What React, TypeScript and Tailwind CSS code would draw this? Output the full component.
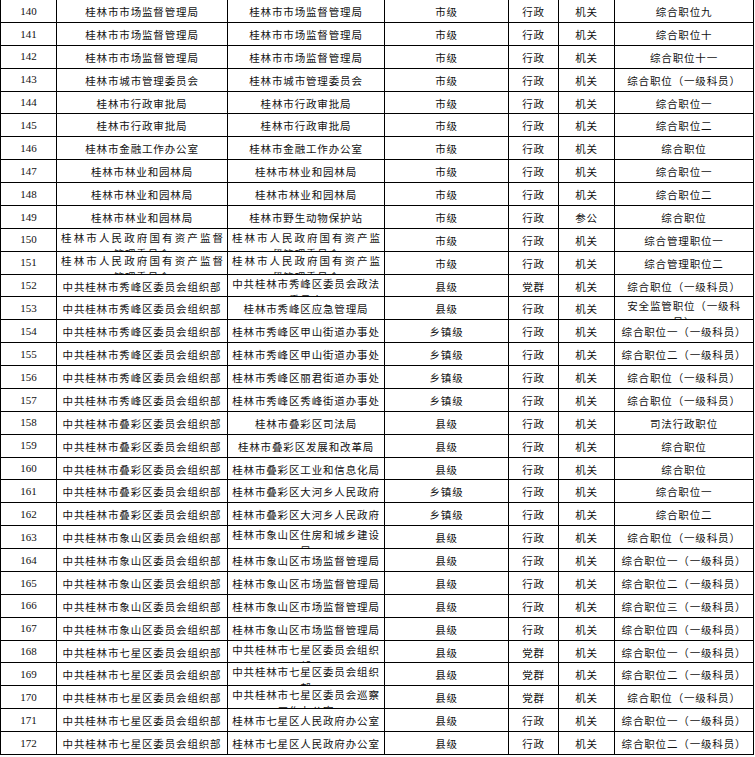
type Wrapped = { l1: string; l2: string; j?: boolean };
type Cell = string | Wrapped;

const A = "桂林市市场监督管理局";
const GZ = "桂林市人民政府国有资产监督管理委员会";
const XF = "中共桂林市秀峰区委员会组织部";
const DC = "中共桂林市叠彩区委员会组织部";
const XS = "中共桂林市象山区委员会组织部";
const QX = "中共桂林市七星区委员会组织部";
const P1 = "综合职位（一级科员）";

const rows: [string, Cell, Cell, string, string, string, Cell][] = [
  ["140", A, A, "市级", "行政", "机关", "综合职位九"],
  ["141", A, A, "市级", "行政", "机关", "综合职位十"],
  ["142", A, A, "市级", "行政", "机关", "综合职位十一"],
  ["143", "桂林市城市管理委员会", "桂林市城市管理委员会", "市级", "行政", "机关", P1],
  ["144", "桂林市行政审批局", "桂林市行政审批局", "市级", "行政", "机关", "综合职位一"],
  ["145", "桂林市行政审批局", "桂林市行政审批局", "市级", "行政", "机关", "综合职位二"],
  ["146", "桂林市金融工作办公室", "桂林市金融工作办公室", "市级", "行政", "机关", "综合职位"],
  ["147", "桂林市林业和园林局", "桂林市林业和园林局", "市级", "行政", "机关", "综合职位一"],
  ["148", "桂林市林业和园林局", "桂林市林业和园林局", "市级", "行政", "机关", "综合职位二"],
  ["149", "桂林市林业和园林局", "桂林市野生动物保护站", "市级", "行政", "参公", "综合职位"],
  [
    "150",
    { l1: GZ.slice(0, 13), l2: GZ.slice(13), j: true },
    { l1: GZ.slice(0, 12), l2: GZ.slice(12), j: true },
    "市级", "行政", "机关", "综合管理职位一",
  ],
  [
    "151",
    { l1: GZ.slice(0, 13), l2: GZ.slice(13), j: true },
    { l1: GZ.slice(0, 12), l2: GZ.slice(12), j: true },
    "市级", "行政", "机关", "综合管理职位二",
  ],
  ["152", XF, { l1: "中共桂林市秀峰区委员会政法", l2: "委员会" }, "县级", "党群", "机关", P1],
  ["153", XF, "桂林市秀峰区应急管理局", "县级", "行政", "机关", { l1: "安全监管职位（一级科", l2: "员）" }],
  ["154", XF, "桂林市秀峰区甲山街道办事处", "乡镇级", "行政", "机关", "综合职位一（一级科员）"],
  ["155", XF, "桂林市秀峰区甲山街道办事处", "乡镇级", "行政", "机关", "综合职位二（一级科员）"],
  ["156", XF, "桂林市秀峰区丽君街道办事处", "乡镇级", "行政", "机关", P1],
  ["157", XF, "桂林市秀峰区秀峰街道办事处", "乡镇级", "行政", "机关", P1],
  ["158", DC, "桂林市叠彩区司法局", "县级", "行政", "机关", "司法行政职位"],
  ["159", DC, "桂林市叠彩区发展和改革局", "县级", "行政", "机关", "综合职位"],
  ["160", DC, "桂林市叠彩区工业和信息化局", "县级", "行政", "机关", "综合职位"],
  ["161", DC, "桂林市叠彩区大河乡人民政府", "乡镇级", "行政", "机关", "综合职位一"],
  ["162", DC, "桂林市叠彩区大河乡人民政府", "乡镇级", "行政", "机关", "综合职位二"],
  ["163", XS, { l1: "桂林市象山区住房和城乡建设", l2: "局" }, "县级", "行政", "机关", P1],
  ["164", XS, "桂林市象山区市场监督管理局", "县级", "行政", "机关", "综合职位一（一级科员）"],
  ["165", XS, "桂林市象山区市场监督管理局", "县级", "行政", "机关", "综合职位二（一级科员）"],
  ["166", XS, "桂林市象山区市场监督管理局", "县级", "行政", "机关", "综合职位三（一级科员）"],
  ["167", XS, "桂林市象山区市场监督管理局", "县级", "行政", "机关", "综合职位四（一级科员）"],
  ["168", QX, { l1: "中共桂林市七星区委员会组织", l2: "部" }, "县级", "党群", "机关", "综合职位一（一级科员）"],
  ["169", QX, { l1: "中共桂林市七星区委员会组织", l2: "部" }, "县级", "党群", "机关", "综合职位二（一级科员）"],
  ["170", QX, { l1: "中共桂林市七星区委员会巡察", l2: "工作办公室" }, "县级", "党群", "机关", P1],
  ["171", QX, "桂林市七星区人民政府办公室", "县级", "行政", "机关", "综合职位一（一级科员）"],
  ["172", QX, "桂林市七星区人民政府办公室", "县级", "行政", "机关", "综合职位二（一级科员）"],
];

function TextCell({ value }: { value: Cell }) {
  if (typeof value === "string") {
    return (
      <div className="h-full overflow-hidden border-r border-black flex items-center justify-center whitespace-nowrap pt-[2px] tracking-[0.85px]">
        {value}
      </div>
    );
  }
  // two-line cell: second line runs under the row border, as in the source sheet
  return (
    <div className="h-full overflow-hidden border-r border-black px-[4px] pt-[1px] leading-[16px] whitespace-nowrap">
      {value.j ? (
        <div className="flex justify-between">
          {value.l1.split("").map((ch, i) => (
            <span key={i}>{ch}</span>
          ))}
        </div>
      ) : (
        <div className="text-center tracking-[0.85px]">{value.l1}</div>
      )}
      <div className="text-center tracking-[0.85px]">{value.l2}</div>
    </div>
  );
}

export default function App() {
  return (
    <div className="w-[755px] h-[757px] overflow-hidden bg-white text-[#111] font-['Noto_Sans_CJK_SC',sans-serif] text-[10.5px]">
      <div className="w-[754px] border-l border-black">
        {rows.map((r) => (
          <div
            key={r[0]}
            className="grid grid-cols-[56px_171px_157px_124px_50px_56px_139px] h-[22.875px] border-b border-black"
          >
            <div className="h-full border-r border-black flex items-center justify-center font-['Liberation_Serif',serif] text-[11px]">
              {r[0]}
            </div>
            <TextCell value={r[1]} />
            <TextCell value={r[2]} />
            <TextCell value={r[3]} />
            <TextCell value={r[4]} />
            <TextCell value={r[5]} />
            <TextCell value={r[6]} />
          </div>
        ))}
      </div>
    </div>
  );
}
